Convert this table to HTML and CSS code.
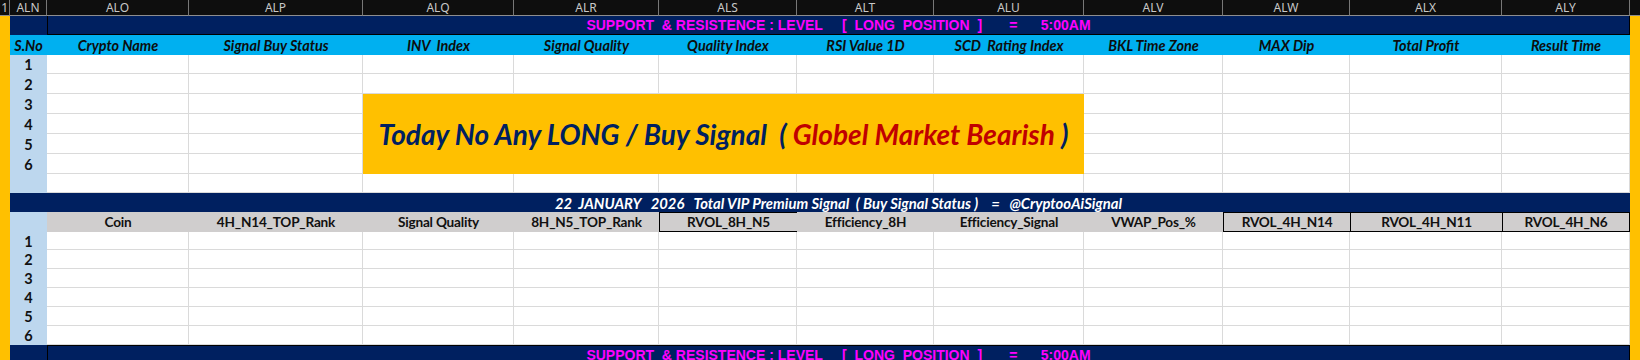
FILE: index.html
```html
<!DOCTYPE html>
<html>
<head>
<meta charset="utf-8">
<link rel="stylesheet" href="styles.css">
</head>
<body>
<div class="sheet">
  <div class="strip strip-left"></div>
  <div class="strip strip-right"></div>
  <div class="box"><span>Today No Any LONG / Buy Signal&nbsp; ( <span class="red">Globel Market Bearish</span> )</span></div>

  <div class="ch ch-edge">1</div>
  <div class="ch">ALN</div>
  <div class="ch">ALO</div>
  <div class="ch">ALP</div>
  <div class="ch">ALQ</div>
  <div class="ch">ALR</div>
  <div class="ch">ALS</div>
  <div class="ch">ALT</div>
  <div class="ch">ALU</div>
  <div class="ch">ALV</div>
  <div class="ch">ALW</div>
  <div class="ch">ALX</div>
  <div class="ch">ALY</div>
  <div class="ch ch-end"></div>

  <div class="navy"></div>
  <div class="title title-first">SUPPORT  &amp; RESISTENCE : LEVEL     [  LONG  POSITION  ]       =      5:00AM</div>

  <div class="hdr">S.No</div>
  <div class="hdr">Crypto Name</div>
  <div class="hdr">Signal Buy Status</div>
  <div class="hdr">INV  Index</div>
  <div class="hdr">Signal Quality</div>
  <div class="hdr">Quality Index</div>
  <div class="hdr">RSI Value 1D</div>
  <div class="hdr">SCD  Rating Index</div>
  <div class="hdr">BKL Time Zone</div>
  <div class="hdr">MAX Dip</div>
  <div class="hdr">Total Profit</div>
  <div class="hdr">Result Time</div>

  <div class="rn">1</div><div class="c"></div><div class="c"></div><div class="c"></div><div class="c"></div><div class="c"></div><div class="c"></div><div class="c"></div><div class="c"></div><div class="c"></div><div class="c"></div><div class="c"></div>
  <div class="rn">2</div><div class="c"></div><div class="c"></div><div class="c"></div><div class="c"></div><div class="c"></div><div class="c"></div><div class="c"></div><div class="c"></div><div class="c"></div><div class="c"></div><div class="c"></div>
  <div class="rn">3</div><div class="c"></div><div class="c"></div><div class="c"></div><div class="c"></div><div class="c"></div><div class="c"></div>
  <div class="rn">4</div><div class="c"></div><div class="c"></div><div class="c"></div><div class="c"></div><div class="c"></div><div class="c"></div>
  <div class="rn">5</div><div class="c"></div><div class="c"></div><div class="c"></div><div class="c"></div><div class="c"></div><div class="c"></div>
  <div class="rn">6</div><div class="c"></div><div class="c"></div><div class="c"></div><div class="c"></div><div class="c"></div><div class="c"></div>
  <div class="rn"></div><div class="c"></div><div class="c"></div><div class="c"></div><div class="c"></div><div class="c"></div><div class="c"></div><div class="c"></div><div class="c"></div><div class="c"></div><div class="c"></div><div class="c"></div>

  <div class="navy"></div>
  <div class="title2">22  JANUARY   2026   Total VIP Premium Signal  ( Buy Signal Status )    =   @CryptooAiSignal</div>

  <div class="rn"></div>
  <div class="ghdr">Coin</div>
  <div class="ghdr">4H_N14_TOP_Rank</div>
  <div class="ghdr">Signal Quality</div>
  <div class="ghdr">8H_N5_TOP_Rank</div>
  <div class="ghdr bx">RVOL_8H_N5</div>
  <div class="ghdr">Efficiency_8H</div>
  <div class="ghdr">Efficiency_Signal</div>
  <div class="ghdr">VWAP_Pos_%</div>
  <div class="ghdr bx">RVOL_4H_N14</div>
  <div class="ghdr bx">RVOL_4H_N11</div>
  <div class="ghdr bx bx-last">RVOL_4H_N6</div>

  <div class="rn">1</div><div class="c"></div><div class="c"></div><div class="c"></div><div class="c"></div><div class="c"></div><div class="c"></div><div class="c"></div><div class="c"></div><div class="c"></div><div class="c"></div><div class="c"></div>
  <div class="rn">2</div><div class="c"></div><div class="c"></div><div class="c"></div><div class="c"></div><div class="c"></div><div class="c"></div><div class="c"></div><div class="c"></div><div class="c"></div><div class="c"></div><div class="c"></div>
  <div class="rn">3</div><div class="c"></div><div class="c"></div><div class="c"></div><div class="c"></div><div class="c"></div><div class="c"></div><div class="c"></div><div class="c"></div><div class="c"></div><div class="c"></div><div class="c"></div>
  <div class="rn">4</div><div class="c"></div><div class="c"></div><div class="c"></div><div class="c"></div><div class="c"></div><div class="c"></div><div class="c"></div><div class="c"></div><div class="c"></div><div class="c"></div><div class="c"></div>
  <div class="rn">5</div><div class="c"></div><div class="c"></div><div class="c"></div><div class="c"></div><div class="c"></div><div class="c"></div><div class="c"></div><div class="c"></div><div class="c"></div><div class="c"></div><div class="c"></div>
  <div class="rn">6</div><div class="c"></div><div class="c"></div><div class="c"></div><div class="c"></div><div class="c"></div><div class="c"></div><div class="c"></div><div class="c"></div><div class="c"></div><div class="c"></div><div class="c"></div>

  <div class="navy"></div>
  <div class="title">SUPPORT  &amp; RESISTENCE : LEVEL     [  LONG  POSITION  ]       =      5:00AM</div>
</div>
</body>
</html>
```

FILE: styles.css
```css
html, body {
  margin: 0;
  padding: 0;
  background: #ffffff;
  overflow: hidden;
}

.sheet {
  display: grid;
  grid-template-columns: 10px 37px 142px 174px 151px 145px 138px 137px 150px 139px 127px 152px 128px 10px;
  grid-template-rows: 16px 19px 20px 19px 20px 20px 20px 20px 20px 19px 19px 20px 18px 19px 19px 19px 19px 19px 19px;
  width: 1640px;
  height: 360px;
  overflow: hidden;
  font-family: Lato, "Liberation Sans", sans-serif;
}

.sheet > div {
  box-sizing: border-box;
  min-width: 0;
  overflow: hidden;
}

.strip {
  background: #ffc000;
}

.strip-left {
  grid-column: 1;
  grid-row: 2 / -1;
}

.strip-right {
  grid-column: 14;
  grid-row: 2 / -1;
}

.ch {
  background: #0e0e0e;
  color: #c8c8c8;
  font-family: "Noto Sans", sans-serif;
  font-size: 12px;
  line-height: 15px;
  display: flex;
  align-items: center;
  justify-content: center;
  border-right: 1px solid #777777;
  border-bottom: 1px solid #8e8e8e;
}

.ch-edge {
  justify-content: flex-end;
  padding-right: 1px;
}

.ch-end {
  border-right: none;
}

.navy {
  background: #002060;
}

.title {
  grid-column: span 11;
  background: #002060;
  border: 1px solid #000000;
  color: #ff00ff;
  font-family: "Liberation Sans", Arial, sans-serif;
  font-weight: bold;
  font-size: 14px;
  white-space: pre;
  display: flex;
  align-items: center;
  justify-content: center;
}

.title-first {
  border-top: none;
}

.hdr {
  background: #00b0f0;
  color: #0d0d0d;
  font-weight: bold;
  font-style: italic;
  font-size: 14.4px;
  white-space: pre;
  display: flex;
  align-items: center;
  justify-content: center;
}

.rn {
  background: #bdd7ee;
  color: #111111;
  font-weight: bold;
  font-size: 14.5px;
  display: flex;
  align-items: center;
  justify-content: center;
}

.c {
  background: #ffffff;
  border-right: 1px solid #dadada;
  border-bottom: 1px solid #dadada;
}

.box {
  grid-column: 5 / span 5;
  grid-row: 6 / span 4;
  background: #ffc000;
  color: #002060;
  font-weight: bold;
  font-style: italic;
  font-size: 28px;
  white-space: pre;
  display: flex;
  align-items: center;
  justify-content: center;
  z-index: 1;
}

.red {
  color: #c00000;
}

.title2 {
  grid-column: span 11;
  background: #002060;
  color: #ffffff;
  font-weight: bold;
  font-style: italic;
  font-size: 14.8px;
  white-space: pre;
  display: flex;
  align-items: center;
  justify-content: center;
}

.ghdr {
  background: #d0cece;
  color: #111111;
  font-weight: bold;
  font-size: 13.6px;
  letter-spacing: -0.2px;
  white-space: pre;
  display: flex;
  align-items: center;
  justify-content: center;
}

.bx {
  border-left: 1px solid #000000;
  border-top: 1px solid #000000;
  border-bottom: 1px solid #000000;
}

.bx-last {
  border-right: 1px solid #000000;
}
```
